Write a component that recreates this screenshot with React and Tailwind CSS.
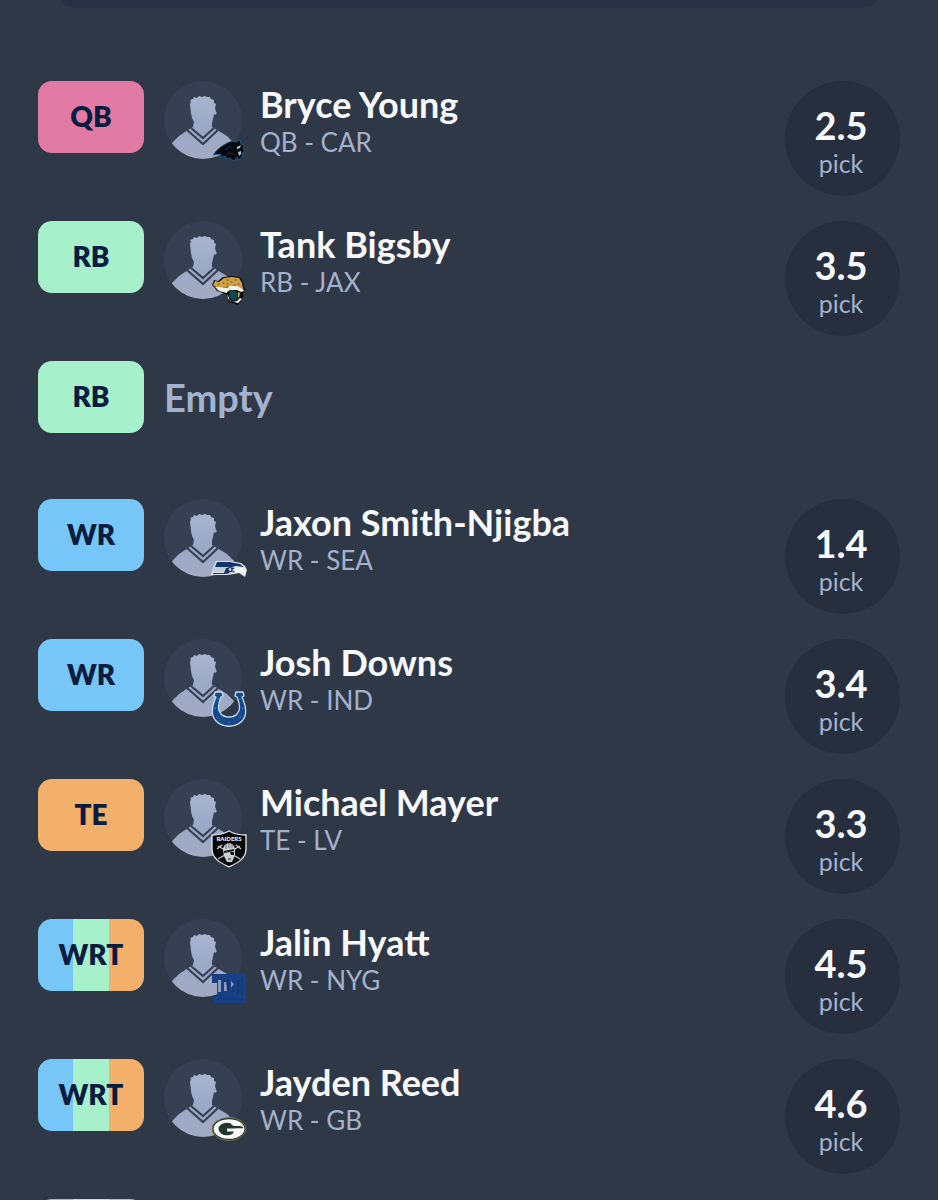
import clsx from 'clsx';

const ROSTER = [
  { id: 1, slot: 'QB', name: 'Bryce Young', position: 'QB', team: 'CAR', pick: '2.5' },
  { id: 2, slot: 'RB', name: 'Tank Bigsby', position: 'RB', team: 'JAX', pick: '3.5' },
  { id: 3, slot: 'RB', empty: true },
  { id: 4, slot: 'WR', name: 'Jaxon Smith-Njigba', position: 'WR', team: 'SEA', pick: '1.4' },
  { id: 5, slot: 'WR', name: 'Josh Downs', position: 'WR', team: 'IND', pick: '3.4' },
  { id: 6, slot: 'TE', name: 'Michael Mayer', position: 'TE', team: 'LV', pick: '3.3' },
  { id: 7, slot: 'WRT', name: 'Jalin Hyatt', position: 'WR', team: 'NYG', pick: '4.5' },
  { id: 8, slot: 'WRT', name: 'Jayden Reed', position: 'WR', team: 'GB', pick: '4.6' },
];

const SLOT_COLORS = {
  QB: 'bg-[#e27ba4]',
  RB: 'bg-[#a6f0cb]',
  WR: 'bg-[#76c7f7]',
  TE: 'bg-[#f2b06a]',
  WRT: 'bg-[linear-gradient(90deg,#76c7f7_0_33.3%,#a6f0cb_33.3%_66.6%,#f2b06a_66.6%)]',
};

// Team marks, all drawn on a 36x36 box
const LOGOS = {
  CAR: (
    <>
      <path d="M2 22 6 17 11 13 16 10 21 8 25 9 29 7 30 11 33 13 32 16 34 18 31 20 31 24 28 27 26 24 23 28 19 25 14 26 15 23 9 24 10 21Z" fill="#05080c" stroke="#1f6b96" strokeWidth="0.7" />
      <path d="m26 14 4-2-1 3-3 1Zm1 5 3-1v3l-2 2Z" fill="#b4c2cc" />
      <path d="m14 17 6-4m-4 8 5-1 3 3" fill="none" stroke="#1d4660" strokeWidth="0.7" />
    </>
  ),
  JAX: (
    <>
      <path d="m1 12 2-5 4 1 5-4 9-1 8 1 3 5 2 8-2 3 0 5-5 7-9-3-3-8-9-3-3-4Z" fill="#0c0d0f" />
      <path d="m2 12 2-4 4 1 5-4 8-1 7 1 3 5 1 6-5-2-6-1-4 2-5-1-6 1Z" fill="#cfa046" />
      <path d="m4 14 6 0 6 1 3-2h7l6 3 1 2-3 1-4-2-7 0-3 2 1 7 5 3 4-1 3-3 2 1-4 4-8-2-3-8-8-2Z" fill="#f4f1e8" />
      <path d="m18 18 4-1 5 3-1 6-3 2-4-3Z" fill="#0c4a50" />
      <path d="m27 19 2 1-1 5-1-1Z" fill="#cfa046" />
      <path d="M7 11h1m4-1h1m3-3h1m3 2h1m3-2h1m2 4h1m-12 0h1m6 1h1m-8 2h1" stroke="#6a4818" strokeWidth="1.1" strokeLinecap="round" />
    </>
  ),
  SEA: (
    <>
      <path d="M5 10h14l11 2 4 3 2 4-2 7-3-2-3-2-5 1-7 1H0l2-7Z" fill="#dfe6ef" />
      <path d="M6 11h13l10 2 4 3-8-1-4 1H4Z" fill="#123468" />
      <path d="M3 16h12l-2 5H1Z" fill="#c3ccd8" />
      <path d="M2 22h11l2-5 4-1 5 1-3 2 3 2-4 1-6 1H2Z" fill="#173462" />
      <path d="m25 17 6 0 3 2-1 5-3-3h-5l-1-2Z" fill="#fafbfc" />
      <circle cx="19" cy="18.5" r="1.3" fill="#eef3f7" />
      <path d="m18 22 4-1" stroke="#e2e9ef" />
    </>
  ),
  IND: (
    <>
      <path d="M4 1h7l1 4-2 1C7 13 6 19 10 23c4 4 12 4 16 0 4-4 3-10 0-17l-2-1 1-4h7l1 4-2 1c4 9 6 18 0 24-7 7-19 7-26 0-6-6-4-15 0-24l-2-1Z" fill="#15498a" stroke="#c6def5" strokeWidth="1.3" strokeLinejoin="round" />
      <g fill="#7fa3cf">
        <circle cx="7" cy="8" r="0.6" />
        <circle cx="4.5" cy="17" r="0.6" />
        <circle cx="7" cy="26" r="0.6" />
        <circle cx="18" cy="31" r="0.6" />
        <circle cx="29" cy="26" r="0.6" />
        <circle cx="31.5" cy="17" r="0.6" />
        <circle cx="29" cy="8" r="0.6" />
      </g>
    </>
  ),
  LV: (
    <>
      <path d="M1 4c6 0 12-1 17-4 5 3 11 4 17 4v14c0 10-9 14-17 18C10 32 1 28 1 18Z" fill="#050607" stroke="#e3e6ea" strokeWidth="1.3" />
      <text x="18" y="10" textAnchor="middle" fontSize="6" fontWeight="900" fill="#f1f3f5">RAIDERS</text>
      <path d="m7 15 22 13m0-13L7 28M6 18l5-4m19 4-5-4" stroke="#c2c8ce" strokeWidth="1.4" />
      <path d="M12 19c0-9 12-9 12 0v5l-3 7h-5l-3-6Z" fill="#c9ced3" />
      <path d="M15 13v5m3-6v5m3-4v4" stroke="#6d747b" strokeWidth="1" />
      <path d="m13 20 10-2v2l-10 2Zm6 1h4v3h-3Z" fill="#111417" />
      <path d="M17 28h3" stroke="#2b3035" />
    </>
  ),
  NYG: (
    <>
      <path d="M1 3h34v29H3v-7h3V12H1Z" fill="#193f85" />
      <path d="M13 9l4 10V9m5 0v12m5-12v14" fill="none" stroke="#12306c" strokeWidth="1.2" />
      <path d="M7 9h3v12H7Zm6 2h2l1 7v2h-3Zm7-1 3 3-3 4Z" fill="#8c9cc1" />
      <path d="M6 28h26M31 7v18" stroke="#15367a" strokeWidth="1.2" />
    </>
  ),
  GB: (
    <>
      <ellipse cx="18" cy="18" rx="17" ry="11.5" fill="#20372f" stroke="#8b8347" strokeWidth="0.8" />
      <ellipse cx="18" cy="18" rx="15.4" ry="9.8" fill="#fbfcf8" />
      <ellipse cx="16" cy="18" rx="8.5" ry="6.3" fill="#20372f" />
      <path d="M18 14.500h9l5 1.500v1.500H18Z" fill="#20372f" />
      <path d="M20 13.500c4-2 7-1 9 1.500h-6Z" fill="#fbfcf8" />
      <path d="M16 17.500h16l-2 4-5 2-3-1 1-2h-7Z" fill="#fbfcf8" />
    </>
  ),
};

function SlotBadge({ slot }) {
  return (
    <div
      className={clsx(
        'flex h-[72px] w-[106px] shrink-0 items-center justify-center rounded-[14px] pb-0.5 text-[28px] font-extrabold text-[#0a1d40]',
        SLOT_COLORS[slot]
      )}
    >
      {slot}
    </div>
  );
}

function Avatar({ id, team }) {
  return (
    <div className="relative size-[78px] shrink-0">
      <svg viewBox="0 0 78 78" className="size-full" aria-hidden="true">
        <defs>
          <linearGradient id={`body-${id}`} x1="0" y1="0" x2="0" y2="1">
            <stop offset="0" stopColor="#a9b5cf" />
            <stop offset="0.5" stopColor="#9ba8c6" />
            <stop offset="1" stopColor="#a3abc2" />
          </linearGradient>
          <clipPath id={`clip-${id}`}>
            <circle cx="39" cy="39" r="39" />
          </clipPath>
        </defs>
        <circle cx="39" cy="39" r="39" fill="#364052" />
        <g clipPath={`url(#clip-${id})`}>
          <path
            d="M26 23 27 20 26 19 29 18 30 16 33 17 35 15 38 16 41 15 43 16 46 16 47 18 50 19 50 22 52 23 51 27 52 31 53 32 51 34 50 33 49 38 48 42V46L53 49 63 55 70 62V78H8V62L15 55 24 49 29 46 30 41 28 37 27 32Z"
            fill={`url(#body-${id})`}
          />
          <path d="m27 47 12 10 11-10M23 49l16 14 15-14" fill="none" stroke="#364052" strokeWidth="2.2" />
        </g>
      </svg>
      <svg viewBox="0 0 36 36" className="absolute top-[52px] left-[47px] size-9 overflow-visible" role="img" aria-label={team}>
        {LOGOS[team]}
      </svg>
    </div>
  );
}

function RosterRow({ player }) {
  return (
    <li className="flex min-h-[113px] items-start gap-5">
      <SlotBadge slot={player.slot} />

      {player.empty ? (
        <p className="flex h-[72px] items-center text-[38px] font-bold text-[#a3b3cf]">Empty</p>
      ) : (
        <div className="flex flex-1 items-start gap-[18px]">
          <Avatar id={player.id} team={player.team} />
          <div className="flex-1 pt-[3px]">
            <h2 className="text-[36px] leading-10 font-bold text-[#f7f9fd]">{player.name}</h2>
            <p className="text-[26px] leading-9 text-[#a3b1cb]">
              {player.position} - {player.team}
            </p>
          </div>
          <div className="flex size-[115px] shrink-0 flex-col items-center rounded-full bg-[#272f3f] pt-6 pr-[3px]">
            <span className="text-[38px] leading-10 font-bold text-[#f7f9fd]">{player.pick}</span>
            <span className="text-[25px] leading-9 text-[#a3b1cb]">pick</span>
          </div>
        </div>
      )}
    </li>
  );
}

export default function App() {
  return (
    <main className="h-screen overflow-hidden bg-[#2f3847] font-['Lato',sans-serif]">
      <div className="mx-[61px] h-2 rounded-[0_0_20px_20px/0_0_8px_8px] bg-[#293242]" />
      <ul className="mt-[73px] flex flex-col gap-[25px] px-[38px]">
        {ROSTER.map((player) => (
          <RosterRow key={player.id} player={player} />
        ))}
        {/* Next flex slot, just peeking in at the bottom edge */}
        <li>
          <div className={clsx('h-[72px] w-[106px] rounded-[14px]', SLOT_COLORS.WRT)} />
        </li>
      </ul>
    </main>
  );
}
